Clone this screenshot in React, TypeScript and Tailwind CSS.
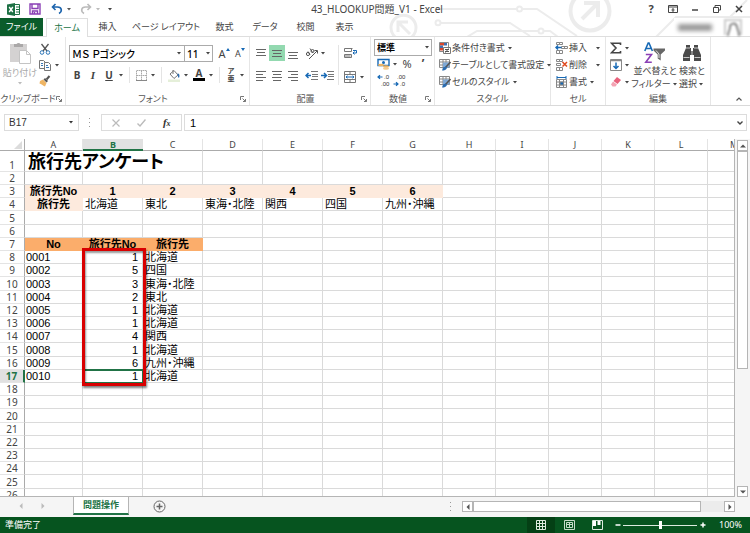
import React, { useState } from 'react';

type Cell = { text: string; kind?: 'head' | 'pale' | 'num' | 'title' | 'id'; span?: number };

const RIBBON_TABS = [
  { label: '挿入', width: 'w-[39px]' },
  { label: 'ページ レイアウト', width: 'w-[78px]' },
  { label: '数式', width: 'w-[39px]' },
  { label: 'データ', width: 'w-[42px]' },
  { label: '校閲', width: 'w-[39px]' },
  { label: '表示', width: 'w-[39px]' },
];

const COLUMNS = ['A', 'B', 'C', 'D', 'E', 'F', 'G', 'H', 'I', 'J', 'K', 'L', 'M'];

const DESTINATIONS = ['北海道', '東北', '東海・北陸', '関西', '四国', '九州・沖縄'];

const ANSWERS = [1, 5, 3, 2, 1, 1, 4, 1, 6, 1];

const ROW_NUMBERS = Array.from({ length: 26 }, (_, i) => i + 1);

const SELECTED = { row: 17, col: 1 };

const getCell = (row: number, col: number): Cell => {
  if (row === 1 && col === 0) return { text: '旅行先アンケート', kind: 'title', span: 3 };
  if (row === 3 && col <= 6) return { text: col === 0 ? '旅行先No' : String(col), kind: 'pale' };
  if (row === 4 && col === 0) return { text: '旅行先', kind: 'pale' };
  if (row === 4 && col <= 6) return { text: DESTINATIONS[col - 1] };
  if (row === 7 && col <= 2) return { text: ['No', '旅行先No', '旅行先'][col], kind: 'head' };
  if (row >= 8 && row <= 17) {
    const answer = ANSWERS[row - 8];
    if (col === 0) return { text: String(row - 7).padStart(4, '0'), kind: 'id' };
    if (col === 1) return { text: String(answer), kind: 'num' };
    if (col === 2) return { text: DESTINATIONS[answer - 1] };
  }
  return { text: '' };
};

const CELL_STYLES = {
  head: 'border-[#fbad6b] bg-[#fbad6b] align-bottom text-center font-bold',
  pale: 'border-[#fdeadd] bg-[#fdeadd] align-bottom text-center font-bold',
  num: 'border-[#dadada] pr-1 align-bottom text-right',
  id: 'border-[#dadada] pl-[1px] align-bottom text-left',
  title: 'border-[#dadada] pt-[2px] pl-[3px] align-top text-[18px] leading-[18px] font-bold',
  plain: 'border-[#dadada] pl-[2px] align-bottom text-left',
};

const Caret: React.FC<{ className?: string }> = ({ className = 'text-[#444]' }) => (
  <svg viewBox="0 0 8 8" className={`h-2 w-2 shrink-0 ${className}`} aria-hidden="true">
    <path d="M2 3h4L4 5.5z" fill="currentColor" />
  </svg>
);

interface ToolProps {
  label: string;
  active?: boolean;
  className?: string;
  children: React.ReactNode;
}

const Tool: React.FC<ToolProps> = ({ label, active = false, className = 'w-4', children }) => (
  <button
    type="button"
    aria-label={label}
    className={`flex h-4 shrink-0 items-center justify-center ${className} ${active ? 'bg-[#93d9b0]' : 'hover:bg-[#d3f0e0]'}`}
  >
    {children}
  </button>
);

const Divider = ({ className = 'mx-1' }: { className?: string }) => (
  <span className={`h-4 w-px shrink-0 bg-[#e4e4e4] ${className}`} />
);

interface GroupProps {
  label: string;
  width: string;
  launcher?: boolean;
  children: React.ReactNode;
}

const Group: React.FC<GroupProps> = ({ label, width, launcher = false, children }) => (
  <section aria-label={label} className={`flex shrink-0 flex-col border-r border-[#e6e6e6] ${width}`}>
    <div className="h-[56px]">{children}</div>
    <div className="flex h-3 items-center text-[#555]">
      <span className="flex-1 text-center whitespace-nowrap">{label}</span>
      {launcher && (
        <button type="button" aria-label={`${label}の詳細`} className="mr-[3px]">
          <svg viewBox="0 0 6 6" className="h-[6px] w-[6px]" fill="none" stroke="#777">
            <path d="M.5 4V.5H4M2.5 2.5l3 3M5.5 3v2.5H3" />
          </svg>
        </button>
      )}
    </div>
  </section>
);

const Lines = ({ rows }: { rows: number[][] }) => (
  <svg viewBox="0 0 12 12" className="h-3 w-3" stroke="#666">
    {rows.map(([x1, x2, y]) => (
      <path key={y} d={`M${x1} ${y}H${x2}`} />
    ))}
  </svg>
);

const ExcelLogo = () => (
  <svg viewBox="0 0 13 13" className="h-[13px] w-[13px]" aria-label="Excel">
    <path d="M0 1.5 8 0v13L0 11.5z" fill="#1e7145" />
    <path d="M8 1.5h4.5v10H8" fill="#fff" stroke="#1e7145" />
    <path d="M9 4h3M9 6.5h3M9 9h3" stroke="#1e7145" />
    <path d="m2.2 4 3.6 5M5.8 4 2.2 9" stroke="#fff" strokeWidth="1.4" />
  </svg>
);

const SaveIcon = () => (
  <svg viewBox="0 0 12 12" className="h-3 w-3" fill="none" stroke="#8a3fb5" strokeWidth="1.4">
    <path d="M1 1h10v10H1zM3 1v4.5h6V1" />
    <path d="M3.5 11V8h5v3M5.5 9v2" />
  </svg>
);

const UndoIcon = ({ className }: { className: string }) => (
  <svg viewBox="0 0 12 12" className={`h-3 w-3 ${className}`} fill="none" stroke="currentColor" strokeWidth="1.6">
    <path d="M4.5 1 1.5 4l3 3M1.5 4h5c4.5 0 5 4.5 1.5 6.5" />
  </svg>
);

const PasteIcon = () => (
  <svg viewBox="0 0 22 24" className="h-6 w-[22px]">
    <path d="M1 3h17v18H1z" fill="#d4d2d2" />
    <path d="M5 3h2.5a2.5 2.5 0 0 1 4 0H14v3H5z" fill="#aaa8a8" />
    <path d="M10.5 9.500h7l4 4v9h-11z" fill="#fff" stroke="#c4c4c4" />
    <path d="M17.5 9.500v4h4" fill="none" stroke="#c4c4c4" />
  </svg>
);

const CutIcon = () => (
  <svg viewBox="0 0 12 12" className="h-3 w-3" fill="none">
    <path d="M2.5 1 8 8M9.500 1 4 8" stroke="#555" strokeWidth="1.3" />
    <circle cx="3" cy="9.5" r="1.8" stroke="#2f77b8" />
    <circle cx="9" cy="9.5" r="1.8" stroke="#2f77b8" />
  </svg>
);

const CopyIcon = () => (
  <svg viewBox="0 0 12 12" className="h-3 w-3" fill="#fff" stroke="#777">
    <path d="M.5 1.5h4l2 2v6h-6z" />
    <path d="M5.5 3.5h4l2 2v6h-6z" />
    <path d="M7 6.5h2M7 8.5h3M2 4.5h2M2 6.5h2" stroke="#3a79b7" />
  </svg>
);

const BrushIcon = () => (
  <svg viewBox="0 0 12 12" className="h-3 w-3">
    <path d="m1 6 3-1.5L7.5 8 6 11.5C4 10.5 2 9 .5 8.5z" fill="#efb564" />
    <path d="m4.5 4.5 1.5-1.5 3 3-1.5 1.5z" fill="#555" />
    <path d="m7.5 4.5 3-3.5" stroke="#555" strokeWidth="2" />
  </svg>
);

const BordersIcon = () => (
  <svg viewBox="0 0 11 11" className="h-[11px] w-[11px]" fill="none" stroke="#aaa">
    <path d="M.5.5h10v10H.5zM5.5.5v10M.5 5.5h10" strokeDasharray="1.5 .5" />
    <path d="M0 10.5h11" stroke="#888" />
  </svg>
);

const FillIcon = () => (
  <svg viewBox="0 0 13 13" className="h-[13px] w-[13px]">
    <path d="m2 5 4-3.5L10 6 6 9.500z" fill="#fff" stroke="#777" />
    <path d="M5 1v4" stroke="#777" />
    <path d="M9.5 4.5c2 0 2.5 2 1.5 4.5-1.5-1-1-2.5-1.5-4.5z" fill="#2b6cb0" />
    <path d="M0 10.5h12V13H0z" fill="#e5efd9" />
  </svg>
);

const OrientationIcon = () => (
  <svg viewBox="0 0 13 13" className="h-[13px] w-[13px]" fill="none" stroke="#555">
    <path d="m4 12 8-8M12.5 6.5v-3h-3" />
    <circle cx="3" cy="7" r="1.6" />
    <path d="m3 4.5 2 3.5M5 1.5l3 4.5" />
    <circle cx="7.5" cy="4" r="1.5" />
  </svg>
);

const IndentIcon = ({ flip = false }: { flip?: boolean }) => (
  <svg viewBox="0 0 13 11" className="h-[11px] w-[13px]" fill="none" stroke="#777">
    <path d="M6 1.5h7M7 4.5h6M7 6.5h6M6 9.500h7" />
    {flip ? (
      <path d="M0 5.5h5M3 3l2.5 2.5L3 8" stroke="#1769b5" strokeWidth="1.5" />
    ) : (
      <path d="M6 5.5H1M3.5 3 1 5.5 3.5 8" stroke="#1769b5" strokeWidth="1.5" />
    )}
  </svg>
);

const WrapIcon = () => (
  <svg viewBox="0 0 13 12" className="h-3 w-[13px]" fill="none" stroke="#777">
    <path d="M.5 1.5h8M.5 4.5h7v-3M.5 7.5h7v3h-7zM.5 4.5v-3M.5 9h6" />
    <path d="M9 3.5h3.5V6H9M10.5 4.5 9 6l1.5 1.5" stroke="#1769b5" />
  </svg>
);

const MergeIcon = () => (
  <svg viewBox="0 0 12 12" className="h-3 w-3" fill="none" stroke="#777">
    <path d="M.5.5h11v11H.5zM.5 3.5h11M.5 8.5h11M6 .5v3M6 8.5v3" />
    <path d="M2 6h8M3.5 4.8 2 6l1.500 1.200M8.5 4.8 10 6 8.5 7.2" stroke="#1769b5" />
  </svg>
);

const CurrencyIcon = () => (
  <svg viewBox="0 0 13 12" className="h-3 w-[13px]">
    <path d="M1 1.5h11v6H1z" fill="#fff" stroke="#1769b5" strokeWidth="1.4" />
    <circle cx="6.5" cy="4.5" r="1.5" fill="#1769b5" />
    <ellipse cx="4" cy="7" rx="3" ry="1.3" fill="#efb564" />
    <ellipse cx="9" cy="8.5" rx="3" ry="1.3" fill="#efb564" />
    <ellipse cx="9" cy="10.5" rx="3" ry="1.3" fill="#f4cb8f" />
  </svg>
);

const DecimalIcon = ({ more = false }: { more?: boolean }) => (
  <svg viewBox="0 0 13 15" className="h-[15px] w-[13px] font-['Liberation_Sans',sans-serif]" fontSize="6" fill="#333">
    <text x={more ? 7 : 4} y="6">{more ? '.0' : '.00'}</text>
    <text x={more ? 4 : 7} y="13">{more ? '.00' : '.0'}</text>
    <path
      d={more ? 'M5.5 4H1m2-1.8L1 4l2 1.8' : 'M.5 11H5M3 9.2 5 11l-2 1.8'}
      fill="none"
      stroke="#1769b5"
      strokeWidth="1.2"
    />
  </svg>
);

const ConditionalIcon = () => (
  <svg viewBox="0 0 12 12" className="h-3 w-3">
    <path d="M.5.5h9v9h-9z" fill="#fff" stroke="#888" />
    <path d="M1 1h4v2.5H1zM1 6h4v2.5H1z" fill="#d9472b" />
    <path d="M5 1h3v2.5H5zM1 3.5h3V6H1z" fill="#3f6fb0" />
    <path d="M4.5 5.5h7v6h-7z" fill="#fff" stroke="#777" />
    <path d="M6 7.5h4M6 9.500h4M9.500 6.5 6.5 10.5" stroke="#555" />
  </svg>
);

const TableFormatIcon = () => (
  <svg viewBox="0 0 12 12" className="h-3 w-3">
    <path d="M.5.5h10v8H.5zM.5 3h10M.5 6h10M4 .5v8M7 .5v8" fill="#fff" stroke="#888" />
    <path d="M4 3.5h6.500v5H4z" fill="#7fa9d6" />
    <path d="m11.5 3-5 5.500" stroke="#555" strokeWidth="1.6" />
    <path d="M7 7.5 4 8.5 3 11.5c2.5 0 4-.5 5-2.5z" fill="#2b6cb0" />
  </svg>
);

const CellsIcon = ({ mode }: { mode: 'insert' | 'delete' | 'format' }) => (
  <svg viewBox="0 0 13 12" className="h-3 w-[13px]" fill="none" stroke="#888">
    {mode !== 'format' && <path d="M1.5.5h3v2h-3zM4.5.5h3v2h-3zM1.5 8.5h3v3h-3zM4.5 8.5h3v3h-3z" />}
    {mode === 'insert' && (
      <>
        <path d="M6.5 4.5h6v2h-6zM9.500 4.5v2" />
        <path d="M6.5 5.5H1M3 3.5 1 5.5l2 2" stroke="#1769b5" strokeWidth="1.5" />
      </>
    )}
    {mode === 'delete' && (
      <>
        <path d="M1.5 4.5h4v2h-4z" />
        <path d="m7.5 3 4.500 4.500M12 3 7.5 7.500" stroke="#e0491e" strokeWidth="1.5" />
      </>
    )}
    {mode === 'format' && (
      <>
        <path d="M1.5 3.5h10v8h-10zM1.5 6h10M1.5 9h10M4.5 3.5v8M8.5 3.5v8" />
        <path d="M5 6h3.5v3H5z" fill="#1769b5" />
        <path d="M2 1.5h9M2 0v3M11 0v3" stroke="#1769b5" />
      </>
    )}
  </svg>
);

const FillDownIcon = () => (
  <svg viewBox="0 0 12 12" className="h-3 w-3" fill="none" stroke="#888">
    <path d="M.5.5h11v11H.5z" />
    <path d="M1 1.5h10" strokeWidth="1.5" />
    <path d="M6 3.5v6M3.5 7 6 9.500 8.500 7" stroke="#1769b5" strokeWidth="1.5" />
  </svg>
);

const EraserIcon = () => (
  <svg viewBox="0 0 12 12" className="h-3 w-3">
    <path d="m7 1 4 3-3.5 4-4-3z" fill="#e8627c" />
    <path d="m3 5.5 4 3-1.5 2H2.5l-1.5-2z" fill="#f3a3b3" />
  </svg>
);

const SortFilterIcon = () => (
  <svg viewBox="0 0 22 22" className="h-[22px] w-[22px]">
    <path d="M.8 9 4.2 1h.8l3.4 8M2.2 6.5h5" fill="none" stroke="#1769b5" strokeWidth="1.6" />
    <path d="M1.8 12.5h5.7L1.8 20.2h6" fill="none" stroke="#8a3fb5" strokeWidth="1.6" />
    <path d="M9.5 6.5H21v2l-4.3 4v6l-3-2v-4L9.5 8.5z" fill="#666" />
    <path d="m12 8.5 3 3.500v4" fill="none" stroke="#fff" strokeWidth=".8" />
  </svg>
);

const BinocularsIcon = () => (
  <svg viewBox="0 0 20 18" className="h-[18px] w-5" fill="#4a4a4a">
    <path d="M4 1h4v3h1v3h2V4h1V1h4v3l3 7v6h-7v-6H8v6H1v-6l3-7z" />
    <path d="M4 4h4M12 4h4M1.5 13.5h6M12.5 13.5h6M10 7v4" stroke="#fff" strokeWidth=".7" />
  </svg>
);

const CircuitPattern = () => (
  <svg viewBox="0 0 370 36" className="absolute top-0 right-0 h-9 w-[370px]" fill="none" stroke="#ececec" strokeWidth="2">
    <circle cx="23.5" cy="27.7" r="12.5" strokeWidth="3" />
    <path d="m30 34-11-11M18 32V22h10" strokeWidth="3" />
    <path d="M56 9h81M142 9h15l40 27M61 23h69l20 13M87 37l10-6h61M164 31h6l8 6" />
    <circle cx="139.5" cy="9" r="2.5" />
    <circle cx="58" cy="22.7" r="2.5" />
    <circle cx="161" cy="31" r="2.5" />
    <circle cx="210" cy="11" r="19.5" strokeWidth="4" />
    <path d="m202 19 15-15M204 3h14v14" strokeWidth="4" />
    <path d="m276 37 20-20h74M350 17 367 0" />
  </svg>
);

const TitleBar = () => (
  <header className="relative bg-white">
    <CircuitPattern />
    <div className="relative flex h-[18px] items-center">
      <div className="flex flex-1 items-center pl-[7px]">
        <ExcelLogo />
        <Tool label="上書き保存" className="ml-2 w-[14px]"><SaveIcon /></Tool>
        <Tool label="元に戻す" className="ml-2 w-[14px]"><UndoIcon className="text-[#1c64ad]" /></Tool>
        <Caret className="ml-[1px] text-[#555]" />
        <Tool label="やり直し" className="ml-[6px] w-[14px]"><UndoIcon className="-scale-x-100 text-[#bbb]" /></Tool>
        <Caret className="ml-[1px] text-[#bbb]" />
        <Tool label="クイック アクセス ツール バーのユーザー設定" className="ml-[4px] w-2"><Caret /></Tool>
      </div>
      <h1 className="text-[10px] text-[#444]">43_HLOOKUP問題_V1 - Excel</h1>
      <div className="flex flex-1 items-center justify-end gap-[6px] pr-[3px] text-[#444]">
        <Tool label="ヘルプ"><span className="text-[11px] font-bold">?</span></Tool>
        <Tool label="リボンの表示オプション">
          <svg viewBox="0 0 10 8" className="h-2 w-[10px]" fill="none" stroke="currentColor">
            <path d="M.5.5h9v7h-9zM.5 2h9M5 3v4M3.5 5h3" />
          </svg>
        </Tool>
        <Tool label="最小化">
          <svg viewBox="0 0 8 8" className="h-2 w-2" stroke="currentColor" strokeWidth="1.5"><path d="M1 5h6" /></svg>
        </Tool>
        <Tool label="元に戻す (縮小)">
          <svg viewBox="0 0 8 8" className="h-2 w-2" fill="none" stroke="currentColor"><path d="M.5 2.5h5v5h-5zM2 2V.5h5.5V5H6" /></svg>
        </Tool>
        <Tool label="閉じる">
          <svg viewBox="0 0 8 8" className="h-2 w-2" stroke="currentColor" strokeWidth="1.5"><path d="m1 1 6 6M7 1 1 7" /></svg>
        </Tool>
      </div>
    </div>
    <nav aria-label="リボン" className="relative flex h-[19px] items-stretch border-b border-[#dedede] text-[#444]">
      <button type="button" className="mr-[3px] w-[43px] bg-[#0a5c2b] text-white">ファイル</button>
      <button type="button" className="-mb-px w-[42px] border-x border-t border-[#dedede] bg-white text-[#217346]">ホーム</button>
      {RIBBON_TABS.map((tab) => (
        <button key={tab.label} type="button" className={`whitespace-nowrap ${tab.width}`}>{tab.label}</button>
      ))}
      <div className="ml-auto flex items-center gap-3 bg-white pr-2 pl-1" aria-label="アカウント">
        <span className="h-[7px] w-[34px] bg-[#999] blur-[2px]" />
        <svg viewBox="0 0 18 17" className="h-[17px] w-[18px] blur-[1px]" fill="none" stroke="#888" strokeWidth="2">
          <path d="M1 16V1h16v15" stroke="#ccc" />
          <path d="M4 17c0-5 2-5 2-9s6-5 7 0 2 4 2 9" />
        </svg>
      </div>
    </nav>
  </header>
);

const ClipboardGroup = () => (
  <Group label="クリップボード" width="w-[66px]" launcher>
    <div className="flex pt-1">
      <button type="button" className="flex w-[37px] flex-col items-center pl-[3px] whitespace-nowrap text-[#aaa]">
        <PasteIcon />
        <span className="mt-[2px]">貼り付け</span>
        <Caret className="text-[#bbb]" />
      </button>
      <div className="flex flex-col">
        <Tool label="切り取り"><CutIcon /></Tool>
        <div className="flex items-center">
          <Tool label="コピー"><CopyIcon /></Tool>
          <Caret />
        </div>
        <Tool label="書式のコピー/貼り付け"><BrushIcon /></Tool>
      </div>
    </div>
  </Group>
);

const FontGroup = () => (
  <Group label="フォント" width="w-[184px]" launcher>
    <div className="flex items-center pt-2 pl-[3px]">
      <div className="relative">
        <select aria-label="フォント" className="block h-[17px] w-[116px] appearance-none border border-[#ababab] bg-white pl-[2px] text-[10px] font-medium text-black">
          <option>ＭＳ Ｐゴシック</option>
        </select>
        <Caret className="pointer-events-none absolute top-1 right-[2px]" />
      </div>
      <div className="relative -ml-px">
        <select aria-label="フォント サイズ" className="block h-[17px] w-[29px] appearance-none border border-[#ababab] bg-white pl-[2px] text-[10px] font-medium text-black">
          <option>11</option>
        </select>
        <Caret className="pointer-events-none absolute top-1 right-[1px]" />
      </div>
      <Tool label="フォント サイズの拡大" className="ml-[3px] w-4">
        <span className="text-[11px]">A</span>
        <svg viewBox="0 0 4 3" className="mb-2 h-[3px] w-1" fill="#1769b5"><path d="m0 3 2-3 2 3z" /></svg>
      </Tool>
      <Tool label="フォント サイズの縮小">
        <span className="text-[9px]">A</span>
        <svg viewBox="0 0 4 3" className="mb-2 h-[3px] w-1" fill="#1769b5"><path d="m0 0 2 3 2-3z" /></svg>
      </Tool>
    </div>
    <div className="flex items-center pt-[5px] pl-[3px]">
      <Tool label="太字"><span className="text-[10px] font-bold">B</span></Tool>
      <Tool label="斜体"><span className="font-['Liberation_Serif',serif] text-[11px] font-bold italic">I</span></Tool>
      <Tool label="下線"><span className="text-[10px] font-bold underline">U</span></Tool>
      <Caret />
      <Divider />
      <Tool label="罫線" className="w-[14px]"><BordersIcon /></Tool>
      <Caret className="ml-[1px] text-[#444]" />
      <Divider />
      <Tool label="塗りつぶしの色"><FillIcon /></Tool>
      <Caret />
      <Tool label="フォントの色" className="ml-[1px] w-4">
        <span className="flex w-3 flex-col items-center">
          <span className="text-[10px] leading-[9px] font-bold">A</span>
          <span className="h-[3px] w-3 bg-black" />
        </span>
      </Tool>
      <Caret />
      <Divider />
      <Tool label="ふりがな" className="w-[14px]">
        <span className="flex flex-col font-['Liberation_Sans','Noto_Sans_CJK_JP',sans-serif] text-[7px] leading-[8px] font-bold"><span>ア</span><span>亜</span></span>
      </Tool>
      <Caret />
    </div>
  </Group>
);

const AlignmentGroup = () => (
  <Group label="配置" width="w-[121px]" launcher>
    <div className="flex pl-[3px]">
      <div>
        <div className="flex items-center pt-2">
          <Tool label="上揃え"><Lines rows={[[1, 11, 2.5], [2, 10, 5.5], [1, 11, 8.5]]} /></Tool>
          <Tool label="上下中央揃え" active><Lines rows={[[1, 11, 3.5], [2, 10, 6.5], [1, 11, 9.5]]} /></Tool>
          <Tool label="下揃え"><Lines rows={[[1, 11, 5.5], [2, 10, 8.5], [1, 11, 11.5]]} /></Tool>
          <Tool label="方向" className="ml-[2px] w-4"><OrientationIcon /></Tool>
          <Caret />
        </div>
        <div className="flex items-center pt-[6px]">
          <Tool label="左揃え"><Lines rows={[[1, 11, 2.5], [1, 8, 5.5], [1, 11, 8.5], [1, 8, 11.5]]} /></Tool>
          <Tool label="中央揃え"><Lines rows={[[1, 11, 2.5], [2, 10, 5.5], [1, 11, 8.5], [2, 10, 11.5]]} /></Tool>
          <Tool label="右揃え"><Lines rows={[[1, 11, 2.5], [4, 11, 5.5], [1, 11, 8.5], [4, 11, 11.5]]} /></Tool>
          <Tool label="インデントを減らす" className="ml-[2px] w-4"><IndentIcon /></Tool>
          <Tool label="インデントを増やす"><IndentIcon flip /></Tool>
        </div>
      </div>
      <div className="mt-2 ml-[3px] flex h-10 flex-col justify-between border-l border-[#e4e4e4] pl-[3px]">
        <Tool label="折り返して全体を表示する"><WrapIcon /></Tool>
        <div className="flex items-center">
          <Tool label="セルを結合して中央揃え"><MergeIcon /></Tool>
          <Caret />
        </div>
      </div>
    </div>
  </Group>
);

const NumberGroup = () => (
  <Group label="数値" width="w-[64px]" launcher>
    <div className="relative mt-[2px] mr-[2px] ml-[3px]">
      <select aria-label="表示形式" className="block h-[17px] w-full appearance-none border border-[#ababab] bg-white pl-[2px] font-bold text-black">
        <option>標準</option>
      </select>
      <Caret className="pointer-events-none absolute top-1 right-[1px]" />
    </div>
    <div className="flex items-center pl-1">
      <Tool label="通貨表示形式"><CurrencyIcon /></Tool>
      <Caret />
      <Tool label="パーセント スタイル"><span className="text-[11px]">%</span></Tool>
      <Tool label="桁区切りスタイル"><span className="text-[12px] font-bold">’</span></Tool>
    </div>
    <div className="flex items-center pl-1">
      <Tool label="小数点以下の表示桁数を増やす"><DecimalIcon more /></Tool>
      <Tool label="小数点以下の表示桁数を減らす"><DecimalIcon /></Tool>
    </div>
  </Group>
);

interface RowButtonProps {
  icon: React.ReactNode;
  label: string;
  wide?: boolean;
}

const RowButton: React.FC<RowButtonProps> = ({ icon, label, wide = false }) => (
  <button type="button" className="flex h-[17px] items-center gap-[1px] whitespace-nowrap hover:bg-[#d3f0e0]">
    {icon}
    <span className={wide ? 'w-6 text-left' : ''}>{label}</span>
    <Caret />
  </button>
);

const EditGroup = () => (
  <Group label="編集" width="w-[105px]">
    <div className="flex pt-[2px]">
      <div className="flex w-7 flex-col pl-1">
        <button type="button" aria-label="オート SUM" className="flex h-[17px] items-center gap-[1px]">
          <svg viewBox="0 0 12 12" className="h-3 w-3" fill="none" stroke="#444" strokeWidth="1.6">
            <path d="M10.5 3V1.2h-9L6 6l-4.5 4.8h9V9" />
          </svg>
          <Caret />
        </button>
        <button type="button" aria-label="フィル" className="flex h-[17px] items-center gap-[1px]"><FillDownIcon /><Caret /></button>
        <button type="button" aria-label="クリア" className="flex h-[17px] items-center gap-[1px]"><EraserIcon /><Caret /></button>
      </div>
      <button type="button" className="flex w-[42px] flex-col items-center pt-[3px] whitespace-nowrap">
        <SortFilterIcon />
        <span className="mt-[1px] h-[13px]">並べ替えと</span>
        <span className="flex items-center">フィルター<Caret /></span>
      </button>
      <button type="button" className="flex w-8 flex-col items-center pt-[5px] whitespace-nowrap">
        <BinocularsIcon />
        <span className="mt-[3px] h-[13px]">検索と</span>
        <span className="flex items-center">選択<Caret /></span>
      </button>
    </div>
  </Group>
);

const Ribbon = () => (
  <div className="flex border-b border-[#d9d9d9] bg-white text-[#444]">
    <ClipboardGroup />
    <FontGroup />
    <AlignmentGroup />
    <NumberGroup />
    <Group label="スタイル" width="w-[116px]">
      <div className="flex flex-col items-start pt-[2px] pl-1">
        <RowButton icon={<ConditionalIcon />} label="条件付き書式" />
        <RowButton icon={<TableFormatIcon />} label="テーブルとして書式設定" />
        <RowButton icon={<TableFormatIcon />} label="セルのスタイル" />
      </div>
    </Group>
    <Group label="セル" width="w-[55px]">
      <div className="flex flex-col items-start pt-[2px] pl-1">
        <RowButton icon={<CellsIcon mode="insert" />} label="挿入" wide />
        <RowButton icon={<CellsIcon mode="delete" />} label="削除" wide />
        <RowButton icon={<CellsIcon mode="format" />} label="書式" />
      </div>
    </Group>
    <EditGroup />
    <button type="button" aria-label="リボンを折りたたむ" className="mt-auto mr-2 mb-1 ml-auto">
      <svg viewBox="0 0 6 4" className="h-1 w-[6px]" fill="none" stroke="#555" strokeWidth="1.2"><path d="m.5 3.5 2.500-2.500 2.500 2.500" /></svg>
    </button>
  </div>
);

interface FormulaBarProps {
  value: string;
  onChange: (value: string) => void;
}

const FormulaBar: React.FC<FormulaBarProps> = ({ value, onChange }) => (
  <div className="flex items-center bg-white pt-2 pr-[3px] pb-2 pl-1 font-['Liberation_Sans','Noto_Sans_CJK_JP',sans-serif] text-[11px] text-[#333]">
    <div className="relative">
      <input aria-label="名前ボックス" defaultValue="B17" className="block h-[17px] w-[75px] border border-[#dcdcdc] pl-1 text-[10px]" />
      <Caret className="pointer-events-none absolute top-1 right-1" />
    </div>
    <svg viewBox="0 0 2 9" className="mx-[10px] h-[9px] w-[2px]" fill="#999">
      <path d="M0 0h1v1H0zM0 4h1v1H0zM0 8h1v1H0z" />
    </svg>
    <div className="flex h-[17px] w-[81px] items-center justify-around border border-[#dcdcdc] px-[2px]">
      <button type="button" aria-label="キャンセル">
        <svg viewBox="0 0 8 8" className="h-2 w-2" stroke="#bbb" strokeWidth="1.2"><path d="m.5.5 7 7M7.5.5l-7 7" /></svg>
      </button>
      <button type="button" aria-label="入力">
        <svg viewBox="0 0 9 8" className="h-2 w-[9px]" fill="none" stroke="#bbb" strokeWidth="1.4"><path d="m.5 4.5 2.500 2.500 5.500-6.500" /></svg>
      </button>
      <button type="button" aria-label="関数の挿入" className="font-['Liberation_Serif',serif] font-bold italic">
        f<span className="text-[8px]">x</span>
      </button>
    </div>
    <div className="relative ml-[2px] flex-1">
      <input
        aria-label="数式バー"
        value={value}
        onChange={(e) => onChange(e.target.value)}
        className="block h-[17px] w-full border border-[#dcdcdc] pl-[5px] text-black"
      />
      <svg viewBox="0 0 6 4" className="absolute top-[7px] right-1 h-1 w-[6px]" fill="none" stroke="#444" strokeWidth="1.4"><path d="m.5.5 2.500 2.500L5.500.5" /></svg>
    </div>
  </div>
);

const Sheet = ({ value }: { value: string }) => (
  <div className="relative min-w-0 flex-1 overflow-hidden border-r border-b border-[#b5b5b5] bg-white">
    <table className="w-[761px] table-fixed border-separate border-spacing-0 font-['Liberation_Sans','Noto_Sans_CJK_JP',sans-serif] text-[11px] leading-[12px] whitespace-nowrap text-black">
      <colgroup>
        <col className="w-[25px]" />
        <col className="w-[58px]" />
        {COLUMNS.slice(1).map((name, i) => (
          <col key={name} className={i < 6 ? 'w-[60px]' : 'w-[53px]'} />
        ))}
      </colgroup>
      <thead className="font-['Noto_Sans',sans-serif] text-[9px] leading-[11px] text-[#444]">
        <tr className="h-3">
          <th aria-label="すべて選択" className="border-r border-b border-[#ababab] p-0">
            <svg viewBox="0 0 8 8" className="mr-[2px] ml-auto h-2 w-2" fill="#dcdcdc"><path d="M8 0v8H0z" /></svg>
          </th>
          {COLUMNS.map((name, i) => (
            <th
              key={name}
              scope="col"
              className={i === SELECTED.col
                ? 'border-b border-[#217346] bg-[#e1e1e1] p-0 font-bold text-[#217346] shadow-[inset_0_-1px_#217346]'
                : 'border-r border-b border-r-[#e4e4e4] border-b-[#ababab] p-0 font-normal'}
            >
              {name}
            </th>
          ))}
        </tr>
      </thead>
      <tbody>
        {ROW_NUMBERS.map((row) => (
          <tr key={row} className={row === 1 ? 'h-[21px]' : row % 5 === 0 ? 'h-[14px]' : 'h-[13px]'}>
            <th
              scope="row"
              className={row === SELECTED.row
                ? "border-r-2 border-b border-r-[#217346] border-b-[#e4e4e4] bg-[#e1e1e1] p-0 text-center align-bottom font-['Noto_Sans',sans-serif] text-[10px] font-bold text-[#217346]"
                : "border-r border-b border-r-[#ababab] border-b-[#e4e4e4] p-0 text-center align-bottom font-['Noto_Sans',sans-serif] text-[10px] font-normal text-[#444]"}
            >
              {row}
            </th>
            {COLUMNS.map((name, col) => {
              if (row === 1 && (col === 1 || col === 2)) return null;
              const cell = getCell(row, col);
              const selected = row === SELECTED.row && col === SELECTED.col;
              return (
                <td
                  key={name}
                  colSpan={cell.span}
                  className={`border-r border-b py-0 ${CELL_STYLES[cell.kind ?? 'plain']} ${selected ? 'outline-2 -outline-offset-1 outline-[#217346]' : ''}`}
                >
                  {selected ? value : cell.text}
                </td>
              );
            })}
          </tr>
        ))}
      </tbody>
    </table>
    {/* callout around the answer column */}
    <div className="pointer-events-none absolute top-[109px] left-[82px] h-[138px] w-[64px] border-3 border-[#d90000] shadow-[1px_2px_2px_rgba(0,0,0,0.5),inset_1px_2px_2px_rgba(0,0,0,0.4)]" />
  </div>
);

const ScrollButton = ({ label, path }: { label: string; path: string }) => (
  <button type="button" aria-label={label} className="flex h-[11px] w-[11px] shrink-0 items-center justify-center border border-[#b5b5b5] bg-white">
    <svg viewBox="0 0 6 6" className="h-[6px] w-[6px]" fill="#555"><path d={path} /></svg>
  </button>
);

const VerticalScroll = () => (
  <div className="flex w-[15px] shrink-0 flex-col items-center bg-[#f5f5f5] pt-[1px]">
    <ScrollButton label="上へスクロール" path="M0 4.5h6L3 1.5z" />
    <div className="flex w-[11px] flex-1 flex-col">
      <div className="h-[65%] border border-[#b5b5b5] bg-white" />
    </div>
    <ScrollButton label="下へスクロール" path="M0 1.5h6L3 4.5z" />
  </div>
);

const SheetTabs = () => (
  <div className="flex h-5 items-start bg-[#f5f5f5]">
    <div className="flex w-[73px] items-center gap-4 pt-[6px] pl-[18px]">
      <button type="button" aria-label="前のシート"><svg viewBox="0 0 6 6" className="h-[6px] w-[6px]" fill="#bbb"><path d="M4.5 0v6L1.5 3z" /></svg></button>
      <button type="button" aria-label="次のシート"><svg viewBox="0 0 6 6" className="h-[6px] w-[6px]" fill="#bbb"><path d="M1.5 0v6l3-3z" /></svg></button>
    </div>
    <button type="button" className="h-[18px] w-14 border-x border-b-2 border-x-[#b5b5b5] border-b-[#217346] bg-white font-bold text-[#217346]">問題操作</button>
    <button type="button" aria-label="新しいシート" className="mt-[3px] ml-6">
      <svg viewBox="0 0 13 13" className="h-[13px] w-[13px]" fill="none" stroke="#666">
        <circle cx="6.5" cy="6.5" r="5.5" />
        <path d="M6.5 3.5v6M3.5 6.5h6" strokeWidth="1.5" />
      </svg>
    </button>
    <div className="mt-1 ml-auto flex w-[286px] items-center pr-[1px]">
      <svg viewBox="0 0 2 9" className="mr-[10px] h-[9px] w-[2px]" fill="#999">
        <path d="M0 0h1v1H0zM0 4h1v1H0zM0 8h1v1H0z" />
      </svg>
      <ScrollButton label="左へスクロール" path="M4.5 0v6L1.5 3z" />
      <div className="flex h-[11px] flex-1 bg-[#ececec]">
        <div className="w-[91%] border border-[#b5b5b5] bg-white" />
      </div>
      <ScrollButton label="右へスクロール" path="M1.5 0v6l3-3z" />
    </div>
    <div className="w-[14px]" />
  </div>
);

const StatusBar = () => {
  const [zoom, setZoom] = useState(100);

  return (
    <footer className="flex h-4 items-center bg-[#06541f] text-white">
      <span className="pl-[5px]">準備完了</span>
      <div className="ml-auto flex h-full items-center">
        <button type="button" aria-label="標準" className="flex h-full w-7 items-center justify-center bg-[#044015]">
          <svg viewBox="0 0 10 10" className="h-[10px] w-[10px]" fill="none" stroke="#dcebdf"><path d="M.5.5h9v9h-9zM.5 3.5h9M.5 6.5h9M3.5.5v9M6.5.5v9" /></svg>
        </button>
        <button type="button" aria-label="ページ レイアウト" className="flex h-full w-7 items-center justify-center">
          <svg viewBox="0 0 11 10" className="h-[10px] w-[11px]" fill="none" stroke="#c4dcc9"><path d="M.5.5h10v9H.5zM2.5 2.5h6v5h-6zM3 4.5h5M5.5 3v5" /></svg>
        </button>
        <button type="button" aria-label="改ページ プレビュー" className="flex h-full w-7 items-center justify-center">
          <svg viewBox="0 0 11 10" className="h-[10px] w-[11px]" fill="none" stroke="#dcebdf"><path d="M.5.5h10v9H.5z" /><path d="M1 1h3v5H1zM5.5 1h3v4h-3z" fill="#fff" stroke="none" /></svg>
        </button>
        <button type="button" aria-label="縮小" className="ml-1 w-2" onClick={() => setZoom(Math.max(10, zoom - 10))}>
          <svg viewBox="0 0 6 6" className="h-[6px] w-[6px]" stroke="#fff" strokeWidth="1.5"><path d="M.5 3h5" /></svg>
        </button>
        <input
          type="range"
          aria-label="ズーム"
          min={10}
          max={190}
          value={zoom}
          onChange={(e) => setZoom(Number(e.target.value))}
          className="h-3 w-[74px] appearance-none bg-transparent bg-[linear-gradient(#dcebdf,#dcebdf)] bg-[length:100%_1px] bg-center bg-no-repeat [&::-webkit-slider-thumb]:h-2 [&::-webkit-slider-thumb]:w-[3px] [&::-webkit-slider-thumb]:appearance-none [&::-webkit-slider-thumb]:bg-white"
        />
        <button type="button" aria-label="拡大" className="ml-[3px] w-2" onClick={() => setZoom(Math.min(190, zoom + 10))}>
          <svg viewBox="0 0 6 6" className="h-[6px] w-[6px]" stroke="#fff" strokeWidth="1.5"><path d="M.5 3h5M3 .5v5" /></svg>
        </button>
        <span className="w-[42px] pl-[11px]">{zoom}%</span>
      </div>
    </footer>
  );
};

const App: React.FC = () => {
  const [value, setValue] = useState('1');

  return (
    <div className="flex h-screen flex-col overflow-hidden bg-white font-['Noto_Sans','Noto_Sans_CJK_JP',sans-serif] text-[9px] leading-3 [font-feature-settings:'palt']">
      <TitleBar />
      <Ribbon />
      <FormulaBar value={value} onChange={setValue} />
      <main className="flex min-h-0 flex-1">
        <Sheet value={value} />
        <VerticalScroll />
      </main>
      <SheetTabs />
      <StatusBar />
    </div>
  );
};

export default App;
